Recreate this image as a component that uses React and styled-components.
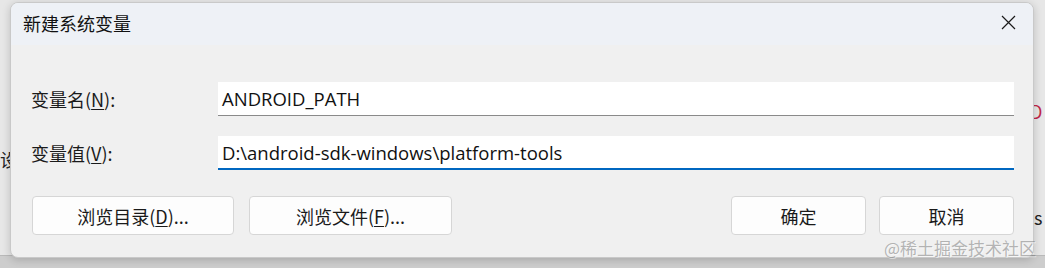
import React from 'react';
import styled, {createGlobalStyle} from 'styled-components';

const Global = createGlobalStyle`
  html, body {
    margin: 0;
    padding: 0;
  }
  body {
    width: 1045px;
    height: 268px;
    overflow: hidden;
    font-family: "Noto Sans", "Noto Sans CJK SC", sans-serif;
  }
`;

const Page = styled.div`
  position: relative;
  width: 1045px;
  height: 268px;
  background: #e7e7e7;
  padding: 2px 11px 10px 10px;
  box-sizing: border-box;
  overflow: hidden;
`;

const BackStrip = styled.div`
  position: absolute;
  left: 0;
  right: 0;
  bottom: 0;
  height: 12px;
  background: #cdcdcd;
  border-top: 1px solid #b9b9b9;
`;

const BackText = styled.span`
  position: absolute;
  left: ${p => p.x}px;
  top: ${p => p.y}px;
  font-family: "Noto Sans CJK SC", sans-serif;
  font-size: 18px;
  line-height: 1;
  color: ${p => p.color || '#222'};
`;

const Dialog = styled.div`
  position: relative;
  display: flex;
  flex-direction: column;
  height: 100%;
  background: #f0f0f0;
  border: 1px solid #c9c9c9;
  border-radius: 8px;
  box-shadow: 0 2px 8px rgba(0, 0, 0, 0.18);
  box-sizing: border-box;
  overflow: hidden;
`;

const TitleBar = styled.div`
  display: flex;
  align-items: center;
  justify-content: space-between;
  height: 42px;
  padding: 0 14px 0 12px;
  background: #eef1f6;
  flex: none;
`;

const Title = styled.span`
  font-family: "Noto Sans CJK SC", sans-serif;
  font-size: 18px;
  color: #111;
  margin-top: -2px;
`;

const Close = styled.div`
  width: 18px;
  height: 18px;
  display: flex;
  align-items: center;
  justify-content: center;
  margin-right: 2px;
  margin-top: -4px;
`;

const Body = styled.div`
  flex: 1;
  display: flex;
  flex-direction: column;
  padding: 37px 19px 0 20px;
`;

const Row = styled.div`
  display: flex;
  align-items: center;
  height: 34px;
  margin-bottom: 20px;
`;

const Label = styled.label`
  width: 187px;
  flex: none;
  font-family: "Noto Sans CJK SC", sans-serif;
  font-size: 18px;
  color: #1a1a1a;
  u {
    text-underline-offset: 2px;
  }
`;

const Field = styled.div`
  flex: 1;
  height: 34px;
  background: #fff;
  box-sizing: border-box;
  border-bottom: ${p => (p.focused ? '2px solid #0067c0' : '1px solid #8a8a8a')};
  display: flex;
  align-items: center;
  padding: 0 4px;
  font-family: "Open Sans", "Noto Sans", sans-serif;
  font-size: 18.5px;
  color: #111;
  padding-top: ${p => (p.focused ? '1px' : '0')};
`;

const Buttons = styled.div`
  display: flex;
  align-items: center;
  margin-top: 6px;
  padding-left: 1px;
`;

const Button = styled.div`
  width: ${p => p.w}px;
  height: 39px;
  box-sizing: border-box;
  background: #fdfdfd;
  border: 1px solid #d6d6d6;
  border-radius: 4px;
  display: flex;
  align-items: center;
  justify-content: center;
  font-family: "Noto Sans CJK SC", sans-serif;
  font-size: 18px;
  color: #1a1a1a;
  margin-right: ${p => p.gap || 0}px;
  margin-left: ${p => (p.push ? 'auto' : '0')};
  u {
    text-underline-offset: 2px;
  }
`;

const Watermark = styled.div`
  position: absolute;
  right: 9px;
  bottom: 8px;
  font-family: "Noto Sans CJK SC", sans-serif;
  font-size: 17px;
  color: rgba(125, 125, 125, 0.55);
  text-shadow: 1px 1px 0 rgba(255, 255, 255, 0.5);
`;

export default function App() {
  return (
    <>
      <Global />
      <Page>
        <BackStrip />
        <BackText x={0} y={150}>设</BackText>
        <BackText x={1030} y={102} color="#c0274a">D</BackText>
        <BackText x={1034} y={208}>s</BackText>
        <Dialog>
          <TitleBar>
            <Title>新建系统变量</Title>
            <Close>
              <svg width="15" height="15" viewBox="0 0 15 15">
                <path d="M1 1 L14 14 M14 1 L1 14" stroke="#1a1a1a" strokeWidth="1.2" />
              </svg>
            </Close>
          </TitleBar>
          <Body>
            <Row>
              <Label>变量名(<u>N</u>):</Label>
              <Field>ANDROID_PATH</Field>
            </Row>
            <Row>
              <Label>变量值(<u>V</u>):</Label>
              <Field focused>D:\android-sdk-windows\platform-tools</Field>
            </Row>
            <Buttons>
              <Button w={202} gap={15}>浏览目录(<u>D</u>)...</Button>
              <Button w={203}>浏览文件(<u>F</u>)...</Button>
              <Button w={135} gap={13} push>确定</Button>
              <Button w={135}>取消</Button>
            </Buttons>
          </Body>
        </Dialog>
        <Watermark>@稀土掘金技术社区</Watermark>
      </Page>
    </>
  );
}
